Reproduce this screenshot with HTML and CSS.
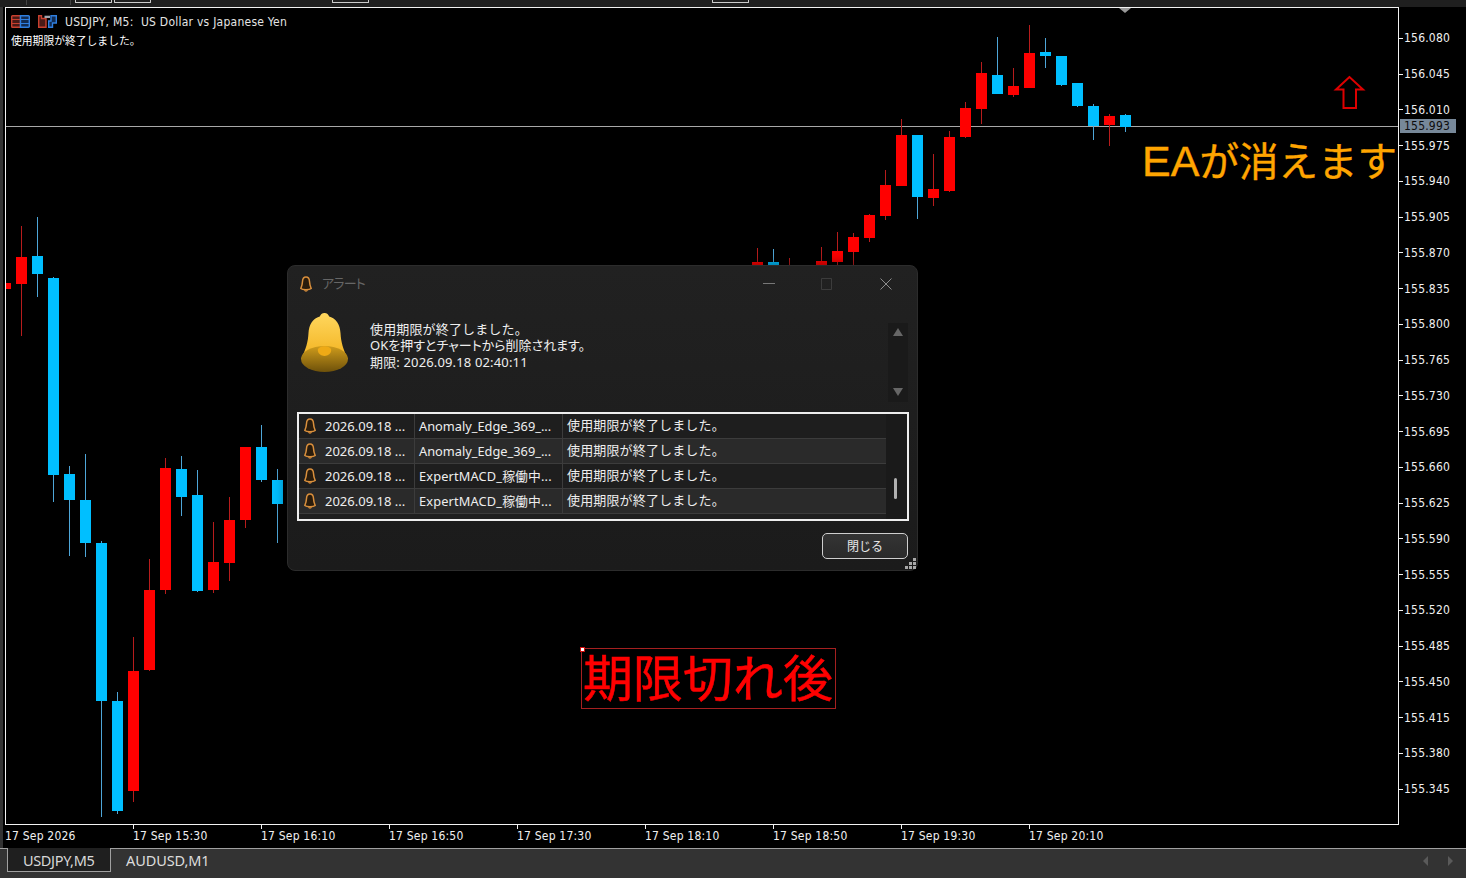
FILE: index.html
```html
<!DOCTYPE html>
<html lang="ja">
<head>
<meta charset="utf-8">
<title>USDJPY,M5</title>
<link rel="stylesheet" href="styles.css">
</head>
<body>
<svg class="defs" width="0" height="0" aria-hidden="true">
  <symbol id="mini-bell" viewBox="0 0 12 16">
    <path d="M6 1C3.6 1 2.6 3 2.5 5.500 2.400 8.500 1.600 10.500.8 12.500 2.500 14 9.500 14 11.200 12.500 10.400 10.500 9.600 8.500 9.500 5.500 9.400 3 8.400 1 6 1z" fill="#2a1c0c" stroke="#d98f3c" stroke-width="1.500"/>
    <path d="M4.500 14.300C5 15.300 7 15.300 7.500 14.300" fill="none" stroke="#d98f3c" stroke-width="1.200"/>
  </symbol>
</svg>
<div class="app">
  <div class="topstrip">
    <i class="sep s1"></i><i class="sep s2"></i>
    <i class="tool t1"></i><i class="tool t2"></i>
    <i class="tool t3"></i><i class="tool t4"></i>
  </div>
  <div class="workspace">
    <div class="leftstrip"></div>
    <div class="chart">
      <div class="plot">
        <svg class="candles" viewBox="6 8 1392 816" width="1392" height="816" aria-hidden="true">
          <path class="priceline" d="M6 126.500H1398"/>
          <path class="wick-red" d="M21.500 226V336M133.500 637V802M149.500 559V671M165.500 458V594M213.500 522V593M229.500 497V581M245.500 447V528M757.500 248V270M789.500 258V270M821.500 247V270M837.500 232V270M853.500 233V270M869.500 214V242M885.500 170V220M901.500 119V186M933.500 154V206M949.500 131V192M965.500 102V138M981.500 62V124M1013.500 68V97M1029.500 25V88M1109.500 114V146"/>
          <path class="wick-blue" d="M37.500 217V297M53.500 277V502M69.500 466V556M85.500 454V557M101.500 541V817M117.500 692V814M181.500 456V516M197.500 470V592M261.500 425V482M277.500 469V543M773.500 249V270M917.500 135V219M997.500 37V94M1045.500 38V68M1061.500 56V86M1077.500 83V107M1093.500 104V140M1125.500 114V132"/>
          <path class="body-red" d="M6 283h5v6h-5zM16 257h11v27h-11zM128 671h11v120h-11zM144 590h11v80h-11zM160 468h11v122h-11zM208 562h11v28h-11zM224 520h11v43h-11zM240 447h11v73h-11zM752 262h11v8h-11zM816 261h11v8h-11zM832 251h11v11h-11zM848 237h11v15h-11zM864 215h11v23h-11zM880 185h11v31h-11zM896 135h11v51h-11zM928 189h11v9h-11zM944 137h11v54h-11zM960 108h11v29h-11zM976 73h11v36h-11zM1008 86h11v9h-11zM1024 53h11v35h-11zM1104 116h11v9h-11z"/>
          <path class="body-blue" d="M32 256h11v18h-11zM48 278h11v197h-11zM64 474h11v26h-11zM80 500h11v43h-11zM96 543h11v158h-11zM112 701h11v110h-11zM176 469h11v28h-11zM192 495h11v96h-11zM256 447h11v33h-11zM272 480h11v24h-11zM768 262h11v8h-11zM912 135h11v62h-11zM992 75h11v19h-11zM1040 52h11v4h-11zM1056 56h11v29h-11zM1072 83h11v23h-11zM1088 106h11v20h-11zM1120 115h11v12h-11z"/>
          <path class="arrow" d="M1349.500 77L1336 89.500H1343.500V108H1356V89.500H1363z"/>
        </svg>
        <div class="chart-head">
          <div class="head-line">
            <svg class="head-icon" viewBox="0 0 19 13" width="19" height="13" aria-hidden="true">
              <path d="M9.500.7H1.500A.8.8 0 0 0 .7 1.500V11.500A.8.8 0 0 0 1.500 12.300H9.500z" fill="#4a1a16" stroke="#c8402f" stroke-width="1.400"/>
              <path d="M1 4.500H9M1 8.500H9" stroke="#c8402f" stroke-width="1.200"/>
              <path d="M9.500.7H17.500A.8.8 0 0 1 18.300 1.500V11.500A.8.8 0 0 1 17.500 12.300H9.500z" fill="#122c52" stroke="#2f7fe0" stroke-width="1.400"/>
              <path d="M10 4.500H18M10 8.500H18" stroke="#2f7fe0" stroke-width="1.200"/>
            </svg>
            <svg class="head-icon" viewBox="0 0 19 13" width="19" height="13" aria-hidden="true">
              <path d="M.7.7H3.500V3.500H8V12.300H.7z" fill="#4a1a16" stroke="#c8402f" stroke-width="1.400"/>
              <path d="M10.700 6V12.300H14.500V8H18.300V.7H13V6z" fill="#122c52" stroke="#2f7fe0" stroke-width="1.400"/>
              <path d="M6.500.7H12V3H6.500z" fill="#a0a6ae"/>
            </svg>
            <span class="symbol">USDJPY, M5:  US Dollar vs Japanese Yen</span>
          </div>
          <div class="ea-comment">使用期限が終了しました。</div>
        </div>
        <i class="shift-mark"></i>
        <div class="note-orange"><span class="note-latin">EA</span>が消えます</div>
        <div class="note-red"><i class="note-handle"></i>期限切れ後</div>
      </div>
      <div class="price-axis">
        <span>156.080</span><span>156.045</span><span>156.010</span><span>155.975</span><span>155.940</span><span>155.905</span><span>155.870</span><span>155.835</span><span>155.800</span><span>155.765</span><span>155.730</span><span>155.695</span><span>155.660</span><span>155.625</span><span>155.590</span><span>155.555</span><span>155.520</span><span>155.485</span><span>155.450</span><span>155.415</span><span>155.380</span><span>155.345</span>
        <b class="price-tag">155.993</b>
      </div>
      <div class="time-axis">
        <span>17 Sep 2026</span><span>17 Sep 15:30</span><span>17 Sep 16:10</span><span>17 Sep 16:50</span><span>17 Sep 17:30</span><span>17 Sep 18:10</span><span>17 Sep 18:50</span><span>17 Sep 19:30</span><span>17 Sep 20:10</span>
      </div>
    </div>
  </div>
  <div class="tabbar">
    <div class="tab active">USDJPY,M5</div>
    <div class="tab">AUDUSD,M1</div>
    <div class="tab-nav">
      <svg viewBox="0 0 5 10" width="5" height="10" aria-hidden="true"><path d="M5 0V10L0 5z"/></svg>
      <svg viewBox="0 0 5 10" width="5" height="10" aria-hidden="true"><path d="M0 0V10L5 5z"/></svg>
    </div>
  </div>

  <div class="dialog">
    <div class="titlebar">
      <svg class="title-bell" width="12" height="16" aria-hidden="true"><use href="#mini-bell"/></svg>
      <span class="title-text">アラート</span>
      <svg class="win-btn" viewBox="0 0 130 12" width="130" height="12" aria-hidden="true">
        <path class="win-min" d="M0 5.500H12"/>
        <path class="win-max" d="M58.500.5H68.500V11.500H58.500z"/>
        <path class="win-close" d="M117.500.5L128.500 11.500M128.500.5L117.500 11.500"/>
      </svg>
    </div>
    <div class="message">
      <svg class="big-bell" viewBox="0 0 47 59" width="47" height="59" aria-hidden="true">
        <defs>
          <linearGradient id="bell-top" x1="0" y1="0" x2="0" y2="1"><stop offset="0" stop-color="#ffd75e"/><stop offset="1" stop-color="#f2b21f"/></linearGradient>
          <linearGradient id="bell-rim" x1="0" y1="0" x2="0" y2="1"><stop offset="0" stop-color="#cf9c1c"/><stop offset="1" stop-color="#6e510a"/></linearGradient>
        </defs>
        <path fill="url(#bell-top)" d="M23.500 0C21 0 19.500 1.600 18.800 3.500 11.500 5.500 8 12 7.500 20 7 29 5 36 0 46H47C42 36 40 29 39.500 20 39 12 35.500 5.500 28.200 3.500 27.500 1.600 26 0 23.500 0z"/>
        <ellipse cx="23.500" cy="46" rx="23.500" ry="13" fill="url(#bell-rim)"/>
        <path d="M16.800 36.800C17.500 32 29.500 32 30.200 36.800 30.200 45 16.800 45 16.800 36.800z" fill="#eeaa16"/>
      </svg>
      <div class="message-text">
        <div>使用期限が終了しました。</div>
        <div class="msg-tight">OKを押すとチャートから削除されます。</div>
        <div>期限: 2026.09.18 02:40:11</div>
      </div>
      <div class="msg-scroll"><i class="arr-up"></i><i class="arr-down"></i></div>
    </div>
    <div class="list">
      <div class="rows">
        <div class="row">
          <div class="cell c-time"><svg class="row-bell" width="12" height="16" aria-hidden="true"><use href="#mini-bell"/></svg>2026.09.18 ...</div>
          <div class="cell c-src">Anomaly_Edge_369_...</div>
          <div class="cell c-msg"><span>使用期限が終了しました。</span></div>
        </div>
        <div class="row alt">
          <div class="cell c-time"><svg class="row-bell" width="12" height="16" aria-hidden="true"><use href="#mini-bell"/></svg>2026.09.18 ...</div>
          <div class="cell c-src">Anomaly_Edge_369_...</div>
          <div class="cell c-msg"><span>使用期限が終了しました。</span></div>
        </div>
        <div class="row">
          <div class="cell c-time"><svg class="row-bell" width="12" height="16" aria-hidden="true"><use href="#mini-bell"/></svg>2026.09.18 ...</div>
          <div class="cell c-src"><span class="src-cjk">ExpertMACD_稼働中...</span></div>
          <div class="cell c-msg"><span>使用期限が終了しました。</span></div>
        </div>
        <div class="row alt">
          <div class="cell c-time"><svg class="row-bell" width="12" height="16" aria-hidden="true"><use href="#mini-bell"/></svg>2026.09.18 ...</div>
          <div class="cell c-src"><span class="src-cjk">ExpertMACD_稼働中...</span></div>
          <div class="cell c-msg"><span>使用期限が終了しました。</span></div>
        </div>
      </div>
      <div class="list-scroll"><i class="thumb"></i></div>
    </div>
    <div class="footer"><button class="close-btn" type="button">閉じる</button></div>
    <svg class="grip" viewBox="0 0 11 11" width="11" height="11" aria-hidden="true">
      <path d="M8 0h3v3H8zM4 4h3v3H4zM8 4h3v3H8zM0 8h3v3H0zM4 8h3v3H4zM8 8h3v3H8z"/>
    </svg>
  </div>
</div>
</body>
</html>
```

FILE: styles.css
```css
* { box-sizing: border-box; }
html, body { margin: 0; padding: 0; background: #000; }
body {
  width: 1466px;
  height: 878px;
  overflow: hidden;
  font-family: "Noto Sans", "Noto Sans CJK JP", sans-serif;
  color: #eee;
}
.defs { position: absolute; }
.app {
  position: relative;
  display: grid;
  grid-template-rows: 7px 841px 30px;
  height: 878px;
}

/* top strip */
.topstrip { position: relative; display: flex; background: #1f1f1f; overflow: hidden; }
.sep { width: 1px; height: 5px; background: #444; }
.s1 { margin-left: 26px; }
.s2 { margin-left: 43px; }
.tool { width: 37px; height: 3px; border: 1px solid #ccc; border-top: 0; border-radius: 0 0 1px 1px; }
.t1 { margin-left: 4px; }
.t2 { margin-left: 2px; }
.t3 { margin-left: 181px; }
.t4 { margin-left: 343px; }

/* workspace */
.workspace { display: flex; background: #000; }
.leftstrip { width: 3px; margin-right: 2px; background: #333; }
.chart {
  display: grid;
  grid-template-columns: 1394px 67px;
  grid-template-rows: 818px 23px;
}
.plot { position: relative; border: 1px solid #f2f2f2; background: #000; }
.candles { position: absolute; left: 0; top: 0; display: block; }
.priceline { stroke: #a8a8a8; fill: none; }
.wick-red { stroke: #b81c1c; fill: none; }
.wick-blue { stroke: #4ea6d8; fill: none; }
.body-red { fill: #ff0000; }
.body-blue { fill: #00bfff; }
.arrow { fill: none; stroke: #dd0000; stroke-width: 2; }

.chart-head { position: relative; padding: 6px 0 0 5px; }
.head-line { display: flex; align-items: center; height: 14px; }
.head-icon { margin-right: 8px; }
.symbol {
  padding-top: 1px;
  white-space: pre;
  font-family: "DejaVu Sans Condensed", "DejaVu Sans", sans-serif;
  font-size: 12px;
  letter-spacing: .25px;
  color: #e4e4e4;
}
.ea-comment {
  margin-top: 4px;
  font-family: "Noto Sans CJK JP", sans-serif;
  font-size: 10.800px;
  line-height: 16px;
  color: #fff;
}
.shift-mark {
  position: absolute;
  left: 1113px;
  top: 0;
  border: 5px solid transparent;
  border-top: 5px solid #999;
  border-bottom: 0;
  border-left-width: 6px;
  border-right-width: 6px;
}
.note-orange {
  position: absolute;
  left: 1136px;
  top: 121px;
  font-family: "Noto Sans CJK JP", sans-serif;
  font-size: 39.500px;
  line-height: 60px;
  -webkit-text-stroke: .4px #ffa500;
  color: #ffa500;
  white-space: nowrap;
}
.note-latin { font-family: "Liberation Sans", sans-serif; font-size: 43px; }
.note-red {
  position: absolute;
  left: 575px;
  top: 640px;
  width: 255px;
  height: 61px;
  border: 1px solid #a52020;
  padding-left: 1px;
  font-family: "Noto Sans CJK JP", sans-serif;
  font-size: 50px;
  line-height: 52px;
  -webkit-text-stroke: .5px #ff0000;
  color: #ff0000;
  white-space: nowrap;
}
.note-handle {
  position: absolute;
  left: -2px;
  top: -2px;
  width: 5px;
  height: 5px;
  background: #fff;
  border: 1px solid #d01010;
}

/* axes */
.price-axis {
  position: relative;
  grid-column: 2;
  grid-row: 1;
  display: grid;
  grid-auto-rows: 35.75px;
  padding-top: 13.6px;
  font-family: "DejaVu Sans Condensed", "DejaVu Sans", sans-serif;
  font-size: 12px;
  letter-spacing: .2px;
  color: #f0f0f0;
}
.price-axis span { display: flex; align-items: center; }
.price-axis span::before {
  content: "";
  width: 4px;
  height: 1px;
  background: #f2f2f2;
  margin-right: 1px;
}
.price-tag {
  position: absolute;
  left: 1px;
  top: 112px;
  width: 56px;
  height: 14px;
  padding-left: 4px;
  background: #778899;
  font-weight: normal;
  font-size: 12px;
  line-height: 14px;
  color: #0d0d0d;
}
.time-axis {
  grid-column: 1 / span 2;
  grid-row: 2;
  display: grid;
  grid-template-columns: repeat(9, 128px);
  font-family: "DejaVu Sans Condensed", "DejaVu Sans", sans-serif;
  font-size: 12px;
  letter-spacing: .2px;
  color: #f0f0f0;
}
.time-axis span { position: relative; padding-top: 4px; line-height: 15px; white-space: nowrap; }
.time-axis span + span::before {
  content: "";
  position: absolute;
  left: 0;
  top: 0;
  width: 1px;
  height: 4px;
  background: #f2f2f2;
}

/* tabs */
.tabbar {
  display: flex;
  align-items: flex-start;
  padding-left: 7px;
  background: #333;
  border-top: 1px solid #a0a0a0;
}
.tab {
  height: 23px;
  padding: 0 15px;
  font-size: 14.500px;
  line-height: 23px;
  letter-spacing: -.1px;
  color: #ddd;
  white-space: nowrap;
}
.tab.active {
  width: 104px;
  height: 24px;
  margin-top: -1px;
  padding-top: 1px;
  letter-spacing: -.35px;
  background: #1f1f1f;
  border: 1px solid #a0a0a0;
  border-top: 0;
  color: #d8d8d8;
}
.tab-nav { display: flex; gap: 20px; margin: 7px 13px 0 auto; }
.tab-nav path { fill: #5a5a5a; }

/* dialog */
.dialog {
  position: absolute;
  left: 287px;
  top: 265px;
  width: 631px;
  height: 306px;
  padding: 0 9px;
  background: linear-gradient(#212121, #1b1b1b);
  border: 1px solid #2c2c2c;
  border-radius: 8px;
  box-shadow: 0 0 14px rgba(0, 0, 0, .55);
  font-size: 13px;
}
.titlebar { display: flex; align-items: center; height: 35px; padding: 0 15px 0 3px; }
.title-bell { margin-right: 10px; }
.title-text {
  padding-bottom: 3px;
  font-family: "Noto Sans CJK JP", sans-serif;
  font-feature-settings: "palt";
  font-size: 13px;
  letter-spacing: -.8px;
  color: #666;
}
.win-btn { margin-left: auto; }
.win-min { stroke: #777; fill: none; }
.win-max { stroke: #3c3c3c; fill: none; }
.win-close { stroke: #8c8c8c; fill: none; }

.message { display: flex; align-items: flex-start; height: 111px; padding-left: 4px; }
.big-bell { margin-top: 12px; }
.message-text {
  margin: 20px 0 0 22px;
  font-family: "Noto Sans", "Noto Sans CJK JP", sans-serif;
  font-size: 13px;
  line-height: 16.5px;
  letter-spacing: .15px;
  color: #eee;
  white-space: nowrap;
}
.msg-tight { margin-top: -1px; margin-bottom: 1px; font-feature-settings: "palt"; letter-spacing: 0; }
.msg-scroll {
  position: relative;
  display: flex;
  flex-direction: column;
  justify-content: space-between;
  align-items: center;
  width: 20px;
  height: 79px;
  margin: 22px 0 0 auto;
  padding: 5px 0 6px;
  background: #1a1a1a;
}
.arr-up, .arr-down { width: 0; height: 0; border: 5px solid transparent; }
.arr-up { border-top: 0; border-bottom: 8px solid #666; }
.arr-down { border-bottom: 0; border-top: 8px solid #666; }

.list {
  display: flex;
  width: 612px;
  height: 109px;
  border: 2px solid #eee;
  background: #1f1f1f;
}
.rows { width: 587px; }
.row {
  display: grid;
  grid-template-columns: 116px 148px 323px;
  height: 25px;
  background: #1e1e1e;
  border-bottom: 1px solid #3c3c3c;
}
.row.alt { background: #2a2a2a; }
.cell {
  display: flex;
  align-items: center;
  white-space: nowrap;
  font-family: "Noto Sans", "Noto Sans CJK JP", sans-serif;
  color: #eee;
  border-right: 1px solid #3c3c3c;
}
.c-time { padding-left: 5px; }
.row-bell { margin-right: 9px; }
.c-src { padding-left: 4px; font-size: 12.800px; }
.src-cjk { padding-bottom: 2px; letter-spacing: .15px; }
.c-msg { padding-left: 4px; border-right: 0; letter-spacing: .15px; }
.c-msg span { padding-bottom: 3px; }
.list-scroll { flex: 1; position: relative; background: #1a1a1a; }
.thumb {
  position: absolute;
  left: 8px;
  top: 64px;
  width: 3px;
  height: 21px;
  border-radius: 2px;
  background: #b0b0b0;
}
.footer { display: flex; justify-content: flex-end; padding: 12px 0 0; }
.close-btn {
  width: 86px;
  height: 26px;
  margin-right: 0;
  padding: 0 0 2px;
  background: linear-gradient(#343434, #2a2a2a);
  border: 1px solid #cfcfcf;
  border-radius: 5px;
  font-family: "Noto Sans CJK JP", sans-serif;
  font-size: 12px;
  color: #e8e8e8;
}
.grip { position: absolute; right: 1px; bottom: 1px; }
.grip path { fill: #a8a8a8; }
```
